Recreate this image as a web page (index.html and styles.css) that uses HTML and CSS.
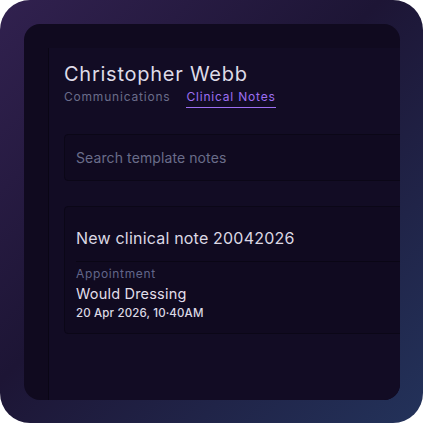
FILE: index.html
```html
<!DOCTYPE html>
<html>
<head>
<meta charset="utf-8">
<link rel="stylesheet" href="styles.css">
</head>
<body>
<div class="frame">
  <div class="panel">
    <div class="sheet">
      <h1 class="name">Christopher Webb</h1>
      <div class="tabs">
        <span class="tab">Communications</span>
        <span class="tab active">Clinical Notes</span>
      </div>
      <div class="search">Search template notes</div>
      <div class="card">
        <div class="card-title">New clinical note 20042026</div>
        <div class="card-body">
          <div class="label">Appointment</div>
          <div class="appt">Would Dressing</div>
          <div class="date">20 Apr 2026, 10·40AM</div>
        </div>
      </div>
    </div>
  </div>
</div>
</body>
</html>
```
FILE: styles.css
```css
* { box-sizing: border-box; }
html, body { margin: 0; padding: 0; background: #ffffff; }
body {
  font-family: Inter, "Open Sans", sans-serif;
  width: 424px;
  height: 424px;
}
.frame {
  width: 423px;
  height: 423px;
  border-radius: 30px;
  background: linear-gradient(135deg, #31214f 0%, #1d1535 45%, #23325a 100%);
  padding: 24px 23px 23px 24px;
  display: flex;
}
.panel {
  flex: 1;
  border-radius: 16px;
  background: #100a1f;
  overflow: hidden;
  padding: 24px 0 0 24px;
  display: flex;
}
.sheet {
  flex: none;
  width: 520px;
  background: #120c24;
  border-left: 1px solid #0a0615;
  padding: 12px 0 0 15px;
}
.name {
  margin: 0;
  font-size: 20px;
  line-height: 28px;
  font-weight: 400;
  color: #dedbe7;
  letter-spacing: 0.75px;
}
.tabs {
  display: flex;
  gap: 16px;
  margin-top: 1px;
}
.tab {
  font-size: 12px;
  line-height: 16px;
  color: #6a6d8a;
  padding-bottom: 2px;
  letter-spacing: 0.8px;
}
.tab.active {
  color: #9d6ff2;
  border-bottom: 1.5px solid #9d6ff2;
}
.search {
  margin-top: 26px;
  height: 47px;
  border: 1px solid #0b0717;
  border-radius: 4px 0 0 4px;
  background: #100a20;
  padding-left: 11px;
  display: flex;
  align-items: center;
  font-size: 14px;
  color: #6a6d8a;
  letter-spacing: 0.1px;
}
.card {
  margin-top: 25px;
  border: 1px solid #0b0717;
  border-radius: 4px 0 0 4px;
  background: #100a20;
  padding: 0 0 0 11px;
}
.card-title {
  font-size: 16px;
  line-height: 24px;
  color: #dcd8e4;
  padding: 19px 0 11px;
  border-bottom: 1px solid #0a0615;
  letter-spacing: 0.2px;
}
.card-body {
  padding: 4px 0 12px;
}
.label {
  font-size: 12px;
  line-height: 16px;
  color: #62668a;
  letter-spacing: 0.65px;
}
.appt {
  margin-top: 2px;
  font-size: 14.5px;
  line-height: 20px;
  color: #e2dfea;
  letter-spacing: 0.2px;
}
.date {
  margin-top: 1px;
  font-size: 11.5px;
  line-height: 16px;
  font-weight: 500;
  color: #dcd9e4;
  letter-spacing: 0.15px;
}
```
